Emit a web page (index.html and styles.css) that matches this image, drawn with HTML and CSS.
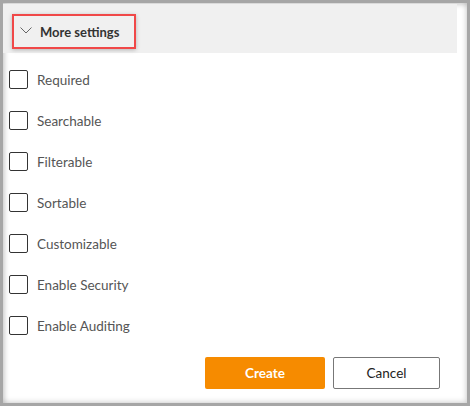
FILE: index.html
```html
<!DOCTYPE html>
<html>
<head>
<meta charset="utf-8">
<link rel="stylesheet" href="styles.css">
</head>
<body>
<div class="frame">
  <div class="header">
    <div class="toggle">
      <svg class="chev" width="12" height="7" viewBox="0 0 12 7"><path d="M0.5 0.5 L6 6 L11.5 0.5" fill="none" stroke="#666" stroke-width="1"/></svg>
      <span>More settings</span>
    </div>
  </div>
  <div class="list">
    <label class="row"><span class="box"></span><span class="lbl">Required</span></label>
    <label class="row"><span class="box"></span><span class="lbl">Searchable</span></label>
    <label class="row"><span class="box"></span><span class="lbl">Filterable</span></label>
    <label class="row"><span class="box"></span><span class="lbl">Sortable</span></label>
    <label class="row"><span class="box"></span><span class="lbl">Customizable</span></label>
    <label class="row"><span class="box"></span><span class="lbl">Enable Security</span></label>
    <label class="row"><span class="box"></span><span class="lbl">Enable Auditing</span></label>
  </div>
  <div class="actions">
    <button class="btn primary">Create</button>
    <button class="btn secondary">Cancel</button>
  </div>
</div>
</body>
</html>
```
FILE: styles.css
```css
html, body { margin: 0; padding: 0; background: #fff; }
body { width: 471px; height: 406px; overflow: hidden; font-family: "Lato", "Open Sans", sans-serif; }
.frame {
  box-sizing: border-box;
  width: 470px;
  height: 406px;
  border: 3px solid #a6a6a6;
  box-shadow: inset 2px 2px 5px rgba(0,0,0,0.18), inset -2px -2px 5px rgba(0,0,0,0.12);
  background: #fff;
  display: flex;
  flex-direction: column;
}
.header {
  margin-top: 1px;
  margin-right: 10px;
  height: 49px;
  background: #f0f0f0;
  padding: 10px 0 0 9px;
  box-sizing: border-box;
}
.toggle {
  box-sizing: border-box;
  width: 124px;
  height: 35px;
  border: 2px solid #f04848;
  box-shadow: 0 1px 4px rgba(0,0,0,0.25);
  display: flex;
  align-items: center;
  padding-left: 6px;
  gap: 8px;
  font-size: 13px;
  font-weight: 700;
  color: #333;
}
.chev { display: block; margin-top: -2px; }
.list {
  display: flex;
  flex-direction: column;
  padding: 6px 0 0 6px;
}
.row {
  height: 41px;
  display: flex;
  align-items: center;
  gap: 9px;
}
.box {
  box-sizing: border-box;
  width: 19px;
  height: 19px;
  border: 1px solid #333;
  border-radius: 2px;
  background: #fff;
}
.lbl {
  font-size: 13.5px;
  color: #555;
}
.actions {
  display: flex;
  justify-content: flex-end;
  gap: 8px;
  padding: 11px 27px 0 0;
}
.btn {
  font-family: inherit;
  height: 32px;
  font-size: 13.5px;
  border-radius: 2px;
  cursor: pointer;
}
.primary {
  width: 120px;
  background: #f68b00;
  color: #fff;
  font-weight: 700;
  border: none;
}
.secondary {
  width: 107px;
  background: #fff;
  color: #222;
  border: 1px solid #777;
}
```
